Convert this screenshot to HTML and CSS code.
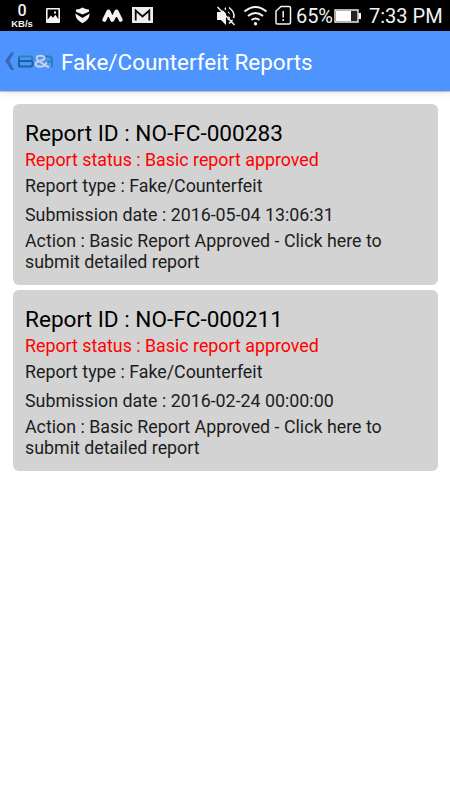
FILE: index.html
```html
<!DOCTYPE html>
<html lang="en">
<head>
<meta charset="utf-8">
<title>Fake/Counterfeit Reports</title>
<link rel="stylesheet" href="styles.css">
</head>
<body>
<div class="status">
  <div class="speed"><span class="rate">0</span><span class="unit">KB/s</span></div>
  <svg class="notif" width="110" height="20" viewBox="45 6 110 20">
    <path fill="#f4f4f4" fill-rule="evenodd" d="M47 8h12q1 0 1 1v13q0 1-1 1H47q-1 0-1-1V9q0-1 1-1zm.6 1.600v10.200l3.200-4.200 2.200 2.200 2.400-3 3 4.400V9.600zM54 11.500h2v2h-2z"/>
    <path fill="#f4f4f4" d="M76 9.500q3.500-.2 6.500-2 3 1.800 6.500 2v2.300l-6.500 2.700-6.500-2.700zM75.300 13.500l7.200 4.500 7.200-4.500q-.2 6.500-7.200 9.700-7-3.200-7.200-9.700z"/>
    <path fill="none" stroke="#f4f4f4" stroke-width="4" stroke-linecap="round" stroke-linejoin="round" d="M104.300 19.800l4.200-8.300 3.800 8.300 4.200-8.300 4.200 8.300"/>
    <path fill="#eee" d="M132 7h21v16h-21z"/>
    <path fill="none" stroke="#080808" stroke-width="1.800" d="M135.700 20.500V10.500l6.800 6 6.800-6v10"/>
  </svg>
  <svg class="system" width="76" height="24" viewBox="216 4 76 24">
    <path fill="#f4f4f4" d="M217 12h4l5-5v18l-5-5h-4z"/>
    <path fill="none" stroke="#f4f4f4" stroke-width="1.600" d="M228 12q3 4 0 8M229 7.500q10 8 0 16"/>
    <path stroke="#000" stroke-width="2" d="M219.500 5.500l17 17"/>
    <path stroke="#f4f4f4" stroke-width="1.500" d="M217.500 7l17 18"/>
    <path fill="none" stroke="#f4f4f4" stroke-width="2.100" d="M244.500 11.500q11-9 22 0M248 16q7.500-6 15 0M251.500 20q4-3 8 0"/>
    <circle cx="255.500" cy="23.800" r="1.700" fill="#f4f4f4"/>
    <path fill="none" stroke="#f4f4f4" stroke-width="1.500" d="M281 6.500h8q1.500 0 1.500 1.500v14.500q0 1.500-1.500 1.500h-11.500q-1.500 0-1.500-1.500V11z"/>
    <path stroke="#f4f4f4" stroke-width="1.500" d="M283.200 11v6.500m0 1.500v2"/>
  </svg>
  <span class="percent">65%</span>
  <svg class="battery" width="28" height="14" viewBox="0 0 28 14">
    <path fill="none" stroke="#eee" stroke-width="1.400" d="M1 1h23v12H1z"/>
    <path fill="#fff" d="M2 2h15v10H2zM24.500 4H27v6h-2.500z"/>
    <path fill="#222" d="M17 2h6v10h-6z"/>
  </svg>
  <span class="clock">7:33 PM</span>
</div>
<header class="appbar">
  <svg class="logo" width="56" height="26" viewBox="0 0 56 26">
    <path fill="#3867b4" d="M11 4.300h3.200L9.400 13l4.800 9H11L5.300 13z"/>
    <g fill="none" stroke-width="2">
      <path stroke="#2c84b0" d="M18 8.500h12.500q2 0 2 2.200t-2 2.300H19"/>
      <path stroke="#1763a4" d="M19 9.500v9h11.500q2.200 0 2.200-2.800t-2.200-2.700H19"/>
      <path stroke="#2f80b2" d="M41 8.500h7.500q3.500 0 3.500 3.500v7.300M47 13.500h5"/>
      <path stroke="#cbd2e0" d="M49 19q-2.500-.3-4-1.700l-7.500-5.300q-2.500-4.300 2.500-4.300t4.500 2.300q-.5 2-4.500 3-5 1-4.500 3.300.5 2.400 5 2.400 4.500 0 6-4.500"/>
    </g>
  </svg>
  <h1>Fake/Counterfeit Reports</h1>
</header>
<main class="list">
  <article class="card">
    <h2>Report ID : NO-FC-000283</h2>
    <p class="state">Report status : Basic report approved</p>
    <p class="type">Report type : Fake/Counterfeit</p>
    <p class="date">Submission date : 2016-05-04 13:06:31</p>
    <p class="action">Action : Basic Report Approved - Click here to<br>submit detailed report</p>
  </article>
  <article class="card">
    <h2>Report ID : NO-FC-000211</h2>
    <p class="state">Report status : Basic report approved</p>
    <p class="type">Report type : Fake/Counterfeit</p>
    <p class="date">Submission date : 2016-02-24 00:00:00</p>
    <p class="action">Action : Basic Report Approved - Click here to<br>submit detailed report</p>
  </article>
</main>
</body>
</html>
```
FILE: styles.css
```css
* { box-sizing: border-box; }
body { margin: 0; height: 800px; overflow: hidden; background: #fff; font-family: Roboto, "Liberation Sans", sans-serif; }
h1, h2, p { margin: 0; font-weight: 400; white-space: nowrap; }
svg { display: block; flex: none; }
.status { height: 31px; background: #000; color: #f2f2f2; display: flex; align-items: center; }
.speed { width: 26px; margin-left: 9px; display: flex; flex-direction: column; align-items: center; }
.rate { font-size: 16px; line-height: 17px; font-weight: 500; }
.unit { font: 700 9.500px/10px "Liberation Sans", sans-serif; }
.notif { margin-left: 10px; }
.system { margin-left: 61px; }
.percent { width: 38px; margin-left: 4px; font-size: 20px; letter-spacing: -.1px; white-space: nowrap; }
.battery { margin-left: 0; }
.clock { margin-left: 7px; font-size: 20px; white-space: nowrap; }
.appbar { height: 60px; background: #4d94ff; box-shadow: 0 1px 1px rgba(0,0,0,.2), 0 3px 8px rgba(0,0,0,.08); display: flex; align-items: center; }
.logo { margin-right: 5px; }
.appbar h1 { padding-top: 1px; color: #fff; font-size: 22.450px; line-height: 30px; }
.list { padding: 13px 12.500px 0; display: flex; flex-direction: column; gap: 5px; }
.card { height: 181px; padding: 15px 12.500px 0; border-radius: 6px; background: #d3d3d3; color: #1d1d1d; font-size: 17.820px; line-height: 20.500px; }
.card h2 { padding-top: 1px; color: #000; font-size: 22.600px; line-height: 28px; }
.state { color: #f00; line-height: 23px; }
.type { line-height: 29px; }
.date { line-height: 29px; }
.action { padding-top: 2px; }
```
